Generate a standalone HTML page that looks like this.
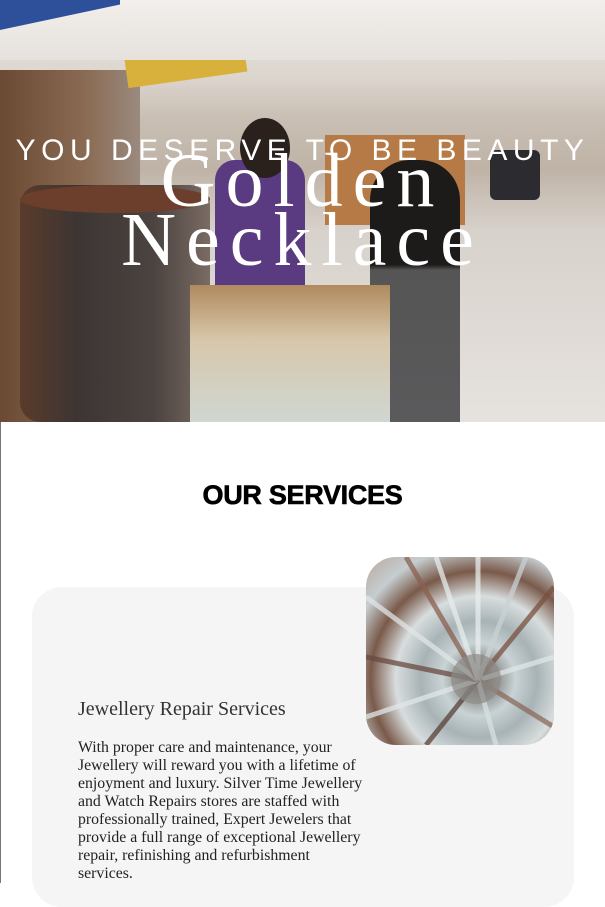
<!DOCTYPE html>
<html><head><meta charset="utf-8"><style>
html,body{margin:0;padding:0;width:605px;height:883px;overflow:hidden;background:#fff}
.hero{position:absolute;left:0;top:0;width:605px;height:422px;overflow:hidden;
background:linear-gradient(180deg,#ebe6e2 0%,#ddd6cf 18%,#c9bfb4 28%,#bfb3a6 40%,#d8d2cc 55%,#e6e2de 100%)}
.b{position:absolute}
.t1{position:absolute;left:0;width:605px;top:132px;text-align:center;color:#fff;font:300 30px "Liberation Sans",sans-serif;letter-spacing:5.5px;line-height:38px}
.t2{position:absolute;left:0;width:605px;top:152px;text-align:center;color:#fff;font:76px/59px "Liberation Serif",serif;letter-spacing:10px}
.side{position:absolute;left:0;top:422px;width:1px;height:461px;background:#777}
h2{position:absolute;left:0;width:605px;top:478px;margin:0;text-align:center;font:bold 27px/34px "Liberation Sans",sans-serif;letter-spacing:-0.3px;color:#000;-webkit-text-stroke:0.6px #000}
.card{position:absolute;left:32px;top:587px;width:542px;height:320px;background:#f5f5f5;border-radius:30px}
.img{position:absolute;left:366px;top:557px;width:188px;height:188px;border-radius:30px;overflow:hidden;
background:radial-gradient(circle at 60% 65%,#3a3530 0,#8a8a88 10%,#c9d3d5 22%,#a8b3b6 35%,#d8ddde 50%,#7a5a4a 65%,#c5cdd0 80%,#b9a79c 100%)}
.img svg{position:absolute;left:0;top:0}
h3{position:absolute;left:78px;top:697px;margin:0;font:normal 20px/24px "Liberation Serif",serif;color:#333}
p{position:absolute;left:78px;top:739px;width:286px;margin:0;font:15.8px/18px "Liberation Serif",serif;color:#222}
</style></head><body>
<div class="hero">
 <div class="b" style="left:0;top:70px;width:140px;height:352px;background:linear-gradient(90deg,#6a4a33,#8a6a52 60%,#9a8a7e)"></div>
 <div class="b" style="left:20px;top:185px;width:190px;height:237px;border-radius:20px;background:linear-gradient(90deg,#5a3b2b,#3d3533 30%,#4a4340 70%,#7a6b63)"></div>
 <div class="b" style="left:20px;top:185px;width:190px;height:28px;border-radius:50%;background:#6b3f2c"></div>
 <div class="b" style="left:215px;top:160px;width:90px;height:140px;background:#5a3a80;border-radius:20px 20px 0 0"></div>
 <div class="b" style="left:240px;top:118px;width:50px;height:60px;background:#2a201c;border-radius:50%"></div>
 <div class="b" style="left:325px;top:135px;width:140px;height:90px;background:#b57a45"></div>
 <div class="b" style="left:370px;top:160px;width:90px;height:262px;background:linear-gradient(180deg,#1d1a1a 0,#1d1a1a 40%,#555 42%,#5a5a5c 100%);border-radius:40px 40px 0 0"></div>
 <div class="b" style="left:190px;top:285px;width:200px;height:137px;background:linear-gradient(180deg,#b08a5e,#d7c7aa 40%,#cfd7d2)"></div>
 <div class="b" style="left:125px;top:38px;width:120px;height:42px;background:#d8b13c;transform:rotate(-8deg)"></div>
 <div class="b" style="left:490px;top:150px;width:50px;height:50px;background:#2c2c30;border-radius:6px"></div>
 <div class="b" style="left:0;top:0;width:605px;height:60px;background:linear-gradient(180deg,#f2efec,#e6e1dc)"></div>
 <div class="b" style="left:0;top:0;width:120px;height:30px;background:#2e4f9a;transform:skewY(-12deg);transform-origin:0 0"></div>
</div>
<div class="t1">YOU DESERVE TO BE BEAUTY</div>
<div class="t2">Golden<br>Necklace</div>
<div class="side"></div>
<h2>OUR SERVICES</h2>
<div class="card"></div>
<div class="img"><svg width="188" height="188" viewBox="0 0 188 188">
<g stroke-width="5" opacity=".75">
<line x1="112" y1="123" x2="112" y2="0" stroke="#e8eeee"/><line x1="112" y1="123" x2="188" y2="30" stroke="#7a5040"/>
<line x1="112" y1="123" x2="188" y2="100" stroke="#dfe6e8"/><line x1="112" y1="123" x2="188" y2="170" stroke="#8a6a5a"/>
<line x1="112" y1="123" x2="130" y2="188" stroke="#d7e0e2"/><line x1="112" y1="123" x2="60" y2="188" stroke="#5a4038"/>
<line x1="112" y1="123" x2="0" y2="160" stroke="#e0e6e8"/><line x1="112" y1="123" x2="0" y2="100" stroke="#6a4a40"/>
<line x1="112" y1="123" x2="0" y2="40" stroke="#dfe5e7"/><line x1="112" y1="123" x2="40" y2="0" stroke="#8a6050"/>
<line x1="112" y1="123" x2="160" y2="0" stroke="#c9d2d5"/><line x1="112" y1="123" x2="70" y2="0" stroke="#e6ecee"/>
</g><circle cx="110" cy="122" r="25" fill="#8d8c88" opacity=".7"/></svg></div>
<h3>Jewellery Repair Services</h3>
<p>With proper care and maintenance, your Jewellery will reward you with a lifetime of enjoyment and luxury. Silver Time Jewellery and Watch Repairs stores are staffed with professionally trained, Expert Jewelers that provide a full range of exceptional Jewellery repair, refinishing and refurbishment services.</p>
</body></html>
